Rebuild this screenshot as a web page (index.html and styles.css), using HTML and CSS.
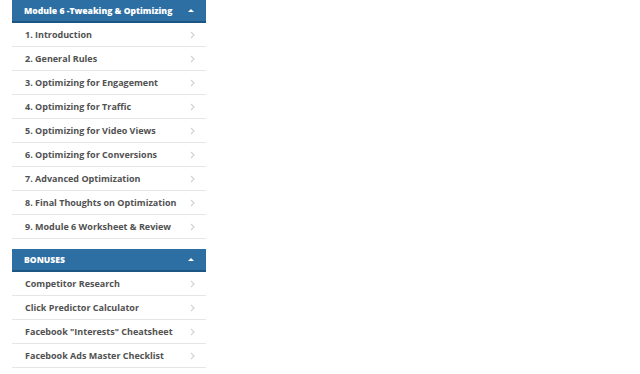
FILE: index.html
```html
<!DOCTYPE html>
<html>
<head>
    <title>Course Modules</title>
    <link rel="stylesheet" href="styles.css">
</head>
<body>
    <div class="sidebar">
        <div class="module">
            <div class="module-header">
                <span>Module 6 -Tweaking &amp; Optimizing</span>
                <span class="caret"></span>
            </div>
            <ul class="lessons">
                <li><span>1. Introduction</span><svg class="chevron" viewBox="0 0 5 8"><path d="M1 1l3 3-3 3"/></svg></li>
                <li><span>2. General Rules</span><svg class="chevron" viewBox="0 0 5 8"><path d="M1 1l3 3-3 3"/></svg></li>
                <li><span>3. Optimizing for Engagement</span><svg class="chevron" viewBox="0 0 5 8"><path d="M1 1l3 3-3 3"/></svg></li>
                <li><span>4. Optimizing for Traffic</span><svg class="chevron" viewBox="0 0 5 8"><path d="M1 1l3 3-3 3"/></svg></li>
                <li><span>5. Optimizing for Video Views</span><svg class="chevron" viewBox="0 0 5 8"><path d="M1 1l3 3-3 3"/></svg></li>
                <li><span>6. Optimizing for Conversions</span><svg class="chevron" viewBox="0 0 5 8"><path d="M1 1l3 3-3 3"/></svg></li>
                <li><span>7. Advanced Optimization</span><svg class="chevron" viewBox="0 0 5 8"><path d="M1 1l3 3-3 3"/></svg></li>
                <li><span>8. Final Thoughts on Optimization</span><svg class="chevron" viewBox="0 0 5 8"><path d="M1 1l3 3-3 3"/></svg></li>
                <li><span>9. Module 6 Worksheet &amp; Review</span><svg class="chevron" viewBox="0 0 5 8"><path d="M1 1l3 3-3 3"/></svg></li>
            </ul>
        </div>

        <div class="module">
            <div class="module-header">
                <span>BONUSES</span>
                <span class="caret"></span>
            </div>
            <ul class="lessons">
                <li><span>Competitor Research</span><svg class="chevron" viewBox="0 0 5 8"><path d="M1 1l3 3-3 3"/></svg></li>
                <li><span>Click Predictor Calculator</span><svg class="chevron" viewBox="0 0 5 8"><path d="M1 1l3 3-3 3"/></svg></li>
                <li><span>Facebook "Interests" Cheatsheet</span><svg class="chevron" viewBox="0 0 5 8"><path d="M1 1l3 3-3 3"/></svg></li>
                <li><span>Facebook Ads Master Checklist</span><svg class="chevron" viewBox="0 0 5 8"><path d="M1 1l3 3-3 3"/></svg></li>
            </ul>
        </div>
    </div>
</body>
</html>
```

FILE: styles.css
```css
:root {
    --header: #2d6fa3;
    --header-border: #1d5583;
    --text: #515151;
    --line: #e6e6e6;
}

body {
    margin: 0;
    padding: 0 0 0 12px;
    font-family: 'Open Sans', sans-serif;
    background: white;
}

.sidebar {
    width: 194px;
}

.module {
    margin-bottom: 10px;
}

.module-header {
    display: flex;
    justify-content: space-between;
    align-items: center;
    height: 21px;
    padding: 0 12px 0 12px;
    background: var(--header);
    border-bottom: 2px solid var(--header-border);
    color: white;
    font-size: 8.6px;
    font-weight: 800;
    white-space: nowrap;
}

.caret {
    width: 0;
    height: 0;
    margin-bottom: 1px;
    border-left: 3px solid transparent;
    border-right: 3px solid transparent;
    border-bottom: 3px solid white;
}

.lessons {
    list-style: none;
    margin: 0;
    padding: 0;
}

.lessons li {
    display: flex;
    justify-content: space-between;
    align-items: center;
    height: 23px;
    padding: 0 11px 0 13px;
    border-bottom: 1px solid var(--line);
    color: var(--text);
    font-size: 9px;
    font-weight: 700;
}

.chevron {
    width: 5px;
    height: 8px;
    fill: none;
    stroke: #d4d4d4;
    stroke-width: 1.2;
}
```
